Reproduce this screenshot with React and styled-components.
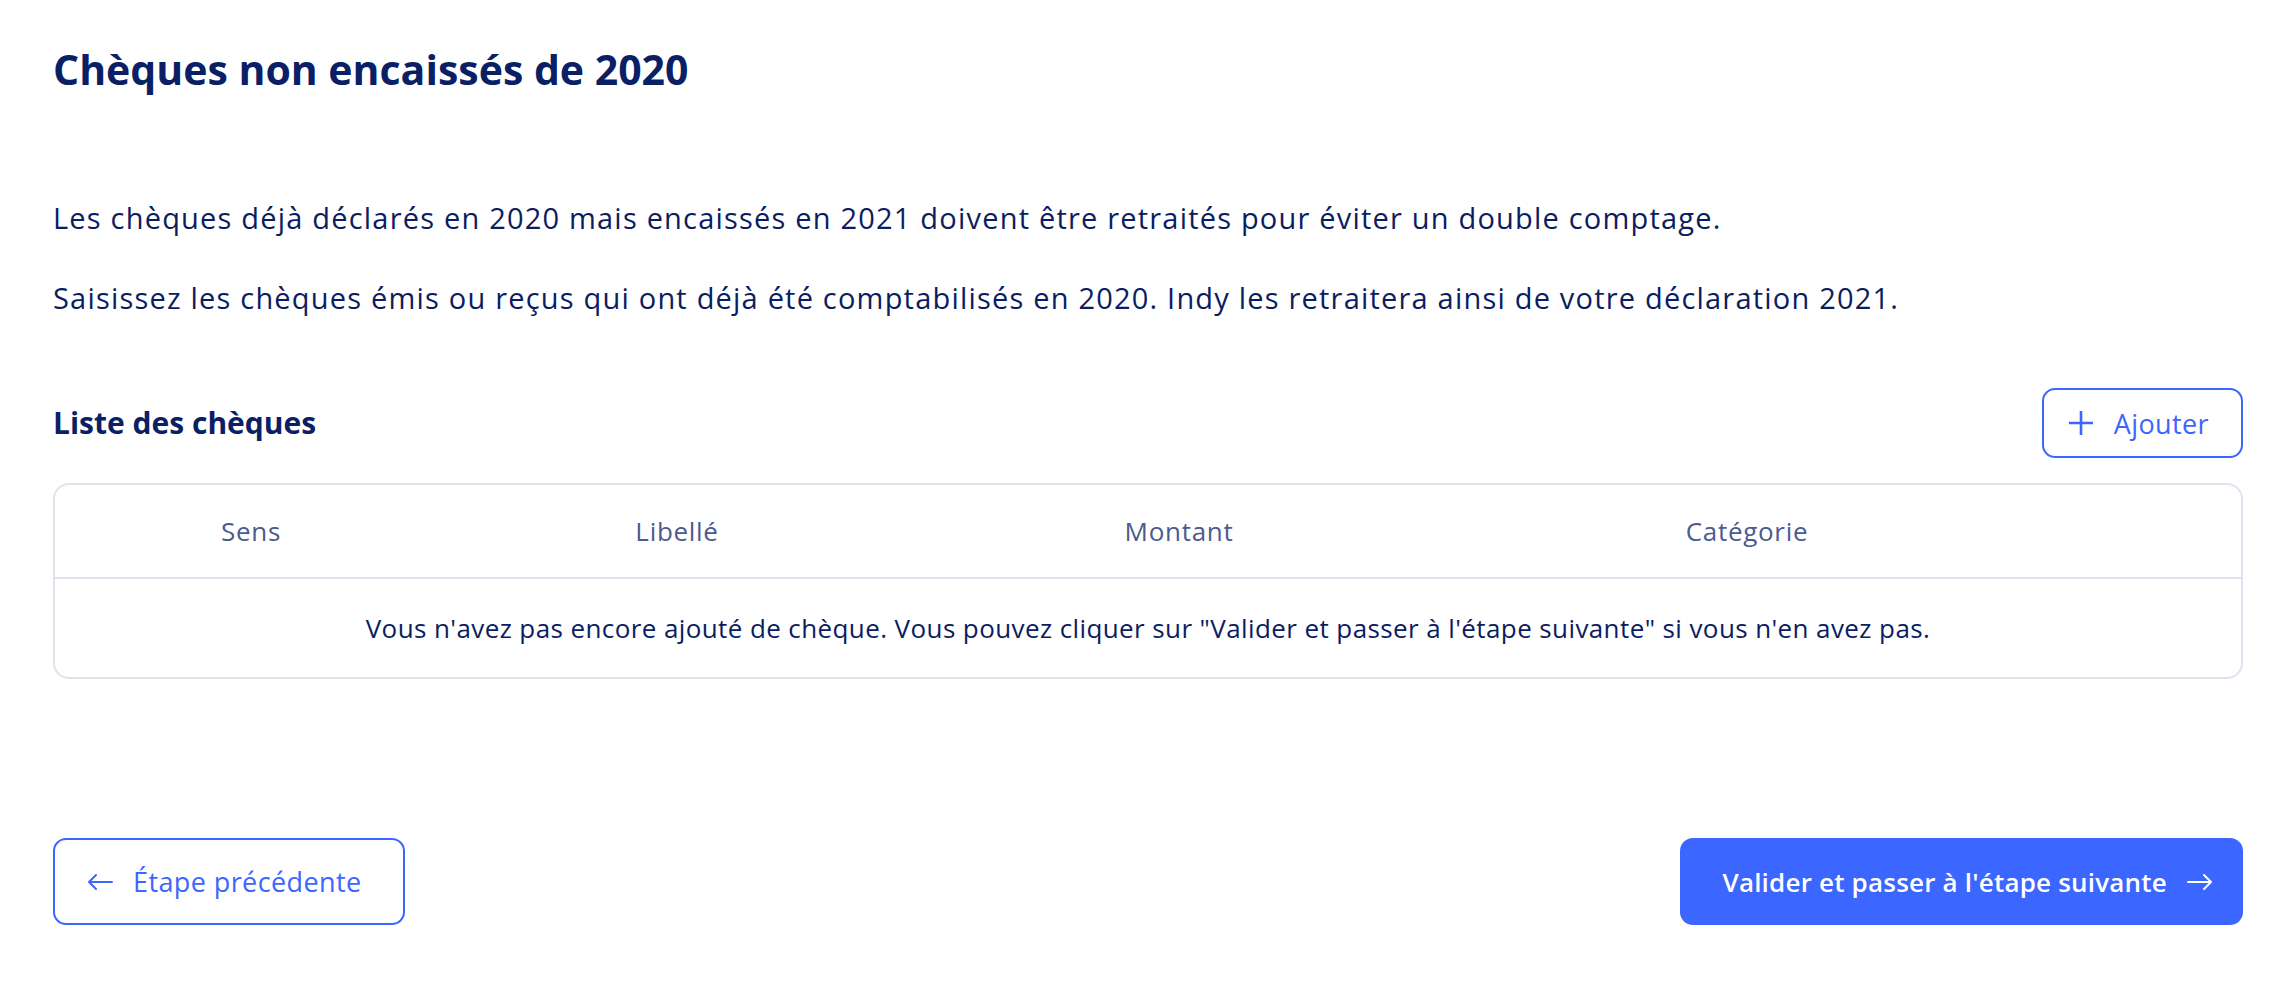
import React from "react";
import styled, { createGlobalStyle } from "styled-components";

const Global = createGlobalStyle`
  html, body { margin: 0; padding: 0; background: #ffffff; }
  body { font-family: "Open Sans", "Noto Sans", sans-serif; color: #0b1d61; }
  * { box-sizing: border-box; }
`;

const Page = styled.main`
  padding: 0 53px;
  display: flex;
  flex-direction: column;
`;

const Title = styled.h1`
  margin: 45px 0 0;
  font-size: 41px;
  line-height: 48px;
  font-weight: 700;
  color: #0a1f66;
`;

const Paragraph = styled.p`
  margin: ${(p) => p.$top}px 0 0;
  font-size: 29px;
  line-height: 34px;
  letter-spacing: 1.2px;
  color: #0b1d61;
`;

const SectionHeader = styled.div`
  margin-top: 73px;
  display: flex;
  align-items: center;
  justify-content: space-between;
`;

const SectionTitle = styled.h2`
  margin: 0;
  font-size: 30px;
  line-height: 36px;
  font-weight: 700;
  color: #0a1f66;
`;

const OutlineButton = styled.button`
  display: inline-flex;
  align-items: center;
  gap: ${(p) => p.$gap || 20}px;
  height: ${(p) => p.$h || 70}px;
  padding: 0 ${(p) => p.$pr}px 0 ${(p) => p.$pl}px;
  border: 2px solid #3c66ff;
  border-radius: 13px;
  background: #ffffff;
  color: #3c66ff;
  font-family: inherit;
  font-size: 27px;
  letter-spacing: 0.4px;
  font-weight: 400;
  cursor: pointer;
`;

const PrimaryButton = styled.button`
  display: inline-flex;
  align-items: center;
  gap: 20px;
  height: 87px;
  padding: 0 30px 0 42px;
  border: none;
  border-radius: 13px;
  background: #3b66ff;
  color: #ffffff;
  font-family: inherit;
  font-size: 26px;
  letter-spacing: 0.2px;
  font-weight: 600;
  cursor: pointer;
`;

const TableCard = styled.div`
  margin-top: 25px;
  border: 2px solid #dfe3ee;
  border-radius: 16px;
  overflow: hidden;
`;

const cols = "392px 460px 544px 592px 1fr";

const HeaderRow = styled.div`
  display: grid;
  grid-template-columns: ${cols};
  align-items: center;
  height: 94px;
  border-bottom: 2px solid #dfe3ee;
`;

const HeaderCell = styled.div`
  text-align: center;
  font-size: 26px;
  letter-spacing: 0.7px;
  color: #4b5b8d;
`;

const EmptyRow = styled.div`
  height: 98px;
  display: flex;
  align-items: center;
  justify-content: center;
  font-size: 26px;
  letter-spacing: 0.4px;
  color: #0b1d61;
`;

const Footer = styled.div`
  margin-top: 159px;
  display: flex;
  justify-content: space-between;
  align-items: center;
`;

const Icon = styled.svg`
  flex: none;
  display: block;
`;

const PlusIcon = () => (
  <Icon width="24" height="24" viewBox="0 0 24 24" fill="none" stroke="currentColor" strokeWidth="2.6" strokeLinecap="butt">
    <path d="M12 0v24M0 12h24" />
  </Icon>
);

const ArrowLeft = () => (
  <Icon width="26" height="18" viewBox="0 0 26 18" fill="none" stroke="currentColor" strokeWidth="2" strokeLinecap="round" strokeLinejoin="round">
    <path d="M25 9H2M9 2L2 9l7 7" />
  </Icon>
);

const ArrowRight = () => (
  <Icon width="26" height="18" viewBox="0 0 26 18" fill="none" stroke="currentColor" strokeWidth="2" strokeLinecap="round" strokeLinejoin="round">
    <path d="M1 9h23M17 2l7 7-7 7" />
  </Icon>
);

const headers = ["Sens", "Libellé", "Montant", "Catégorie", ""];

export default function App() {
  return (
    <>
      <Global />
      <Page>
        <Title>Chèques non encaissés de 2020</Title>
        <Paragraph $top={108}>
          Les chèques déjà déclarés en 2020 mais encaissés en 2021 doivent être retraités pour éviter un double comptage.
        </Paragraph>
        <Paragraph $top={46}>
          Saisissez les chèques émis ou reçus qui ont déjà été comptabilisés en 2020. Indy les retraitera ainsi de votre déclaration 2021.
        </Paragraph>
        <SectionHeader>
          <SectionTitle>Liste des chèques</SectionTitle>
          <OutlineButton $pl={25} $pr={32} $gap={21}>
            <PlusIcon />
            Ajouter
          </OutlineButton>
        </SectionHeader>
        <TableCard>
          <HeaderRow>
            {headers.map((h, i) => (
              <HeaderCell key={i}>{h}</HeaderCell>
            ))}
          </HeaderRow>
          <EmptyRow>
            Vous n'avez pas encore ajouté de chèque. Vous pouvez cliquer sur "Valider et passer à l'étape suivante" si vous n'en avez pas.
          </EmptyRow>
        </TableCard>
        <Footer>
          <OutlineButton $h={87} $pl={32} $pr={41} $gap={20}>
            <ArrowLeft />
            Étape précédente
          </OutlineButton>
          <PrimaryButton>
            Valider et passer à l'étape suivante
            <ArrowRight />
          </PrimaryButton>
        </Footer>
      </Page>
    </>
  );
}
